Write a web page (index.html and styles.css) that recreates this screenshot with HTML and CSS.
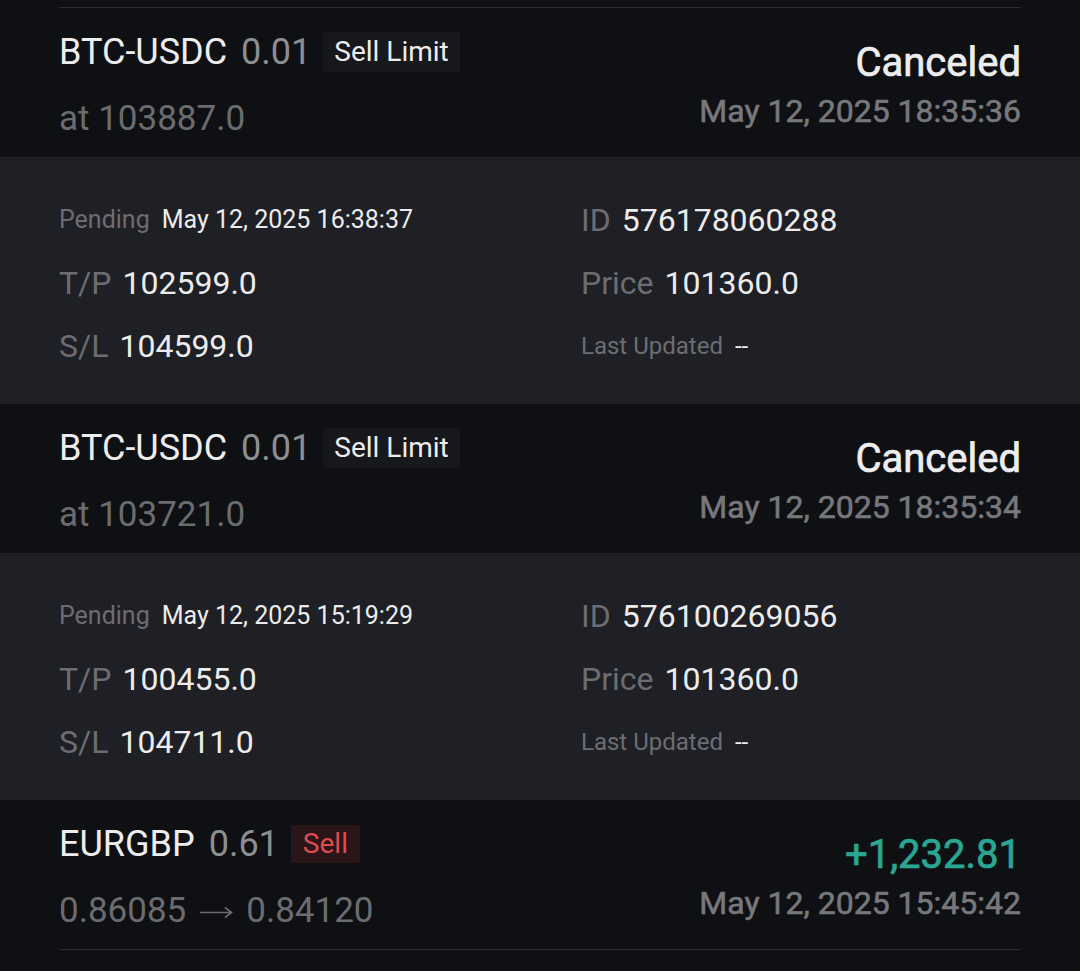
FILE: index.html
```html
<!DOCTYPE html>
<html lang="en">
  <head>
    <meta charset="UTF-8" />
    <meta name="viewport" content="width=device-width, initial-scale=1.0" />
    <title>Order History</title>
    <link rel="stylesheet" href="styles.css">
  </head>
  <body>
    <div id="history">
      <!-- end of the previous order, scrolled off -->
      <div class="order-tail"></div>

      <div class="order">
        <div class="order-main">
          <div class="title">
            <span class="symbol">BTC-USDC</span>
            <span class="qty">0.01</span>
            <span class="badge">Sell Limit</span>
          </div>
          <div class="sub">at 103887.0</div>
        </div>
        <div class="order-side">
          <div class="status">Canceled</div>
          <div class="time">May 12, 2025 18:35:36</div>
        </div>
      </div>
      <div class="detail">
        <div class="cell small"><span class="label">Pending</span><span class="value">May 12, 2025 16:38:37</span></div>
        <div class="cell"><span class="label">ID</span><span class="value">576178060288</span></div>
        <div class="cell"><span class="label">T/P</span><span class="value">102599.0</span></div>
        <div class="cell"><span class="label">Price</span><span class="value">101360.0</span></div>
        <div class="cell"><span class="label">S/L</span><span class="value">104599.0</span></div>
        <div class="cell tiny"><span class="label">Last Updated</span><span class="value">--</span></div>
      </div>

      <div class="order">
        <div class="order-main">
          <div class="title">
            <span class="symbol">BTC-USDC</span>
            <span class="qty">0.01</span>
            <span class="badge">Sell Limit</span>
          </div>
          <div class="sub">at 103721.0</div>
        </div>
        <div class="order-side">
          <div class="status">Canceled</div>
          <div class="time">May 12, 2025 18:35:34</div>
        </div>
      </div>
      <div class="detail">
        <div class="cell small"><span class="label">Pending</span><span class="value">May 12, 2025 15:19:29</span></div>
        <div class="cell"><span class="label">ID</span><span class="value">576100269056</span></div>
        <div class="cell"><span class="label">T/P</span><span class="value">100455.0</span></div>
        <div class="cell"><span class="label">Price</span><span class="value">101360.0</span></div>
        <div class="cell"><span class="label">S/L</span><span class="value">104711.0</span></div>
        <div class="cell tiny"><span class="label">Last Updated</span><span class="value">--</span></div>
      </div>

      <div class="order closed">
        <div class="order-main">
          <div class="title">
            <span class="symbol">EURGBP</span>
            <span class="qty">0.61</span>
            <span class="badge sell">Sell</span>
          </div>
          <div class="sub">
            0.86085
            <svg class="arrow" width="34" height="14" viewBox="0 0 34 14">
              <path d="M1 7.5H32M26 2.5L32.5 7.5L26 12.5" fill="none" stroke="#6b6c70" stroke-width="1.6" />
            </svg>
            0.84120
          </div>
        </div>
        <div class="order-side">
          <div class="status profit">+1,232.81</div>
          <div class="time">May 12, 2025 15:45:42</div>
        </div>
      </div>
    </div>
  </body>
</html>
```

FILE: styles.css
```css
body {
  margin: 0;
  background: #0f1013;
  font-family: Roboto, "Liberation Sans", sans-serif;
  color: #ececec;
}
#history {
  width: 1080px;
}
.order-tail {
  height: 7px;
  margin: 0 59px;
  border-bottom: 1px solid #2a2b2f;
}
.order {
  display: flex;
  justify-content: space-between;
  align-items: flex-start;
  height: 149px;
  margin: 0 59px;
  box-sizing: border-box;
}
.order.closed {
  height: 150px;
  border-bottom: 1px solid #2a2b2f;
}
.order-main {
  padding-top: 24px;
}
.title {
  display: flex;
  align-items: center;
  height: 40px;
}
.symbol {
  font-size: 36px;
  color: #ededed;
}
.qty {
  font-size: 36px;
  color: #8d8e92;
  margin-left: 14px;
}
.badge {
  display: inline-block;
  height: 40px;
  line-height: 40px;
  padding: 0 11px;
  margin-left: 12px;
  font-size: 28px;
  color: #ececec;
  background: #17181b;
  border-radius: 3px;
}
.badge.sell {
  height: 38px;
  line-height: 38px;
  padding: 0 12px;
  color: #de4c4f;
  background: #2a1618;
}
.sub {
  display: flex;
  align-items: center;
  margin-top: 24px;
  height: 44px;
  font-size: 35px;
  color: #6b6c70;
}
.arrow {
  margin: 4px 13px 0 13px;
}
.order-side {
  padding-top: 31px;
  text-align: right;
}
/* no medium weight installed: regular + thin stroke */
.status {
  height: 48px;
  line-height: 48px;
  font-size: 40px;
  -webkit-text-stroke: 0.7px currentColor;
  color: #ededed;
}
.status.profit {
  color: #2aa794;
}
.time {
  height: 48px;
  line-height: 48px;
  font-size: 32px;
  -webkit-text-stroke: 0.6px currentColor;
  color: #77787c;
}
.detail {
  display: grid;
  grid-template-columns: 522px 1fr;
  grid-auto-rows: 63px;
  padding: 31px 59px 27px;
  background: #1f2025;
}
.cell {
  display: flex;
  align-items: center;
  font-size: 32px;
}
.cell .label {
  color: #6c6d72;
  margin-right: 11px;
}
.cell .value {
  color: #ececec;
}
.cell.small {
  font-size: 25px;
}
.cell.small .label {
  margin-right: 12px;
}
.cell.tiny {
  font-size: 24px;
}
.cell.tiny .label {
  margin-right: 12px;
}
```
